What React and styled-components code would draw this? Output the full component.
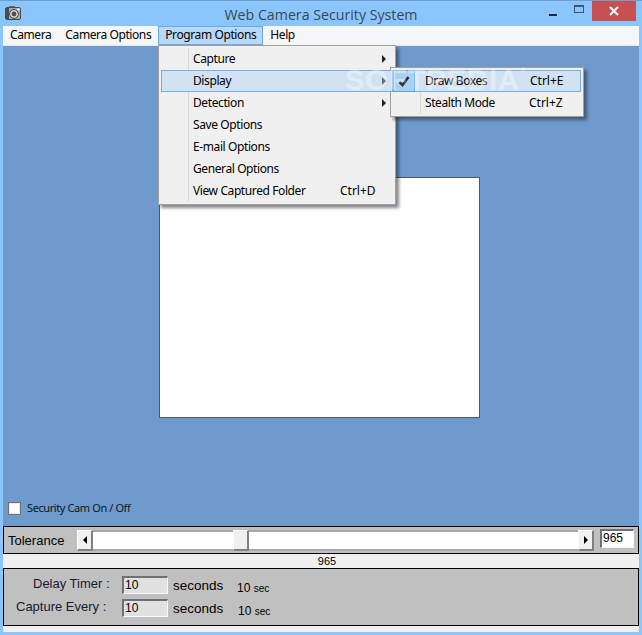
import styled, { createGlobalStyle } from "styled-components";

const GlobalStyle = createGlobalStyle`
  html, body { margin: 0; padding: 0; }
  body { font-family: "Noto Sans", sans-serif; }
`;

const Win = styled.div`
  position: relative;
  width: 642px;
  height: 635px;
  box-sizing: border-box;
  overflow: hidden;
  background: #8ac6fd;
  border-top: 1px solid #6f9fd0;
  display: flex;
  flex-direction: column;
`;

const TitleBar = styled.div`
  height: 25px;
  flex: none;
  display: flex;
  align-items: flex-start;
  padding-left: 5px;
`;

const Title = styled.div`
  position: absolute;
  left: 0;
  right: 0;
  top: 3px;
  text-align: center;
  font-family: "Open Sans", "Noto Sans", sans-serif;
  font-size: 14.2px;
  line-height: 21px;
  color: #3a4654;
`;

const WinButtons = styled.div`
  margin-left: auto;
  margin-right: 6px;
  display: flex;
  align-items: flex-start;
  position: relative;
`;

const WinBtn = styled.div`
  width: ${(p) => p.$w}px;
  height: 20px;
  display: flex;
  align-items: center;
  justify-content: center;
  background: ${(p) => p.$bg || "transparent"};
`;

const Content = styled.div`
  flex: 1;
  margin: 0 3px 3px;
  display: flex;
  flex-direction: column;
  min-height: 0;
`;

const MenuBar = styled.div`
  height: 19px;
  flex: none;
  background: #f5f6f7;
  border-bottom: 1px solid #e8e9ea;
  display: flex;
  font-size: 12px;
  letter-spacing: -0.4px;
  color: #000;
`;

const MenuItem = styled.div`
  height: 19px;
  box-sizing: border-box;
  padding: 0 ${(p) => (p.$active ? 6 : 7)}px;
  line-height: 16px;
  white-space: nowrap;
  background: ${(p) => (p.$active ? "#b8d8f8" : "transparent")};
  border: ${(p) => (p.$active ? "1px solid #6fa8e0" : "1px solid transparent")};
  border-left-width: ${(p) => (p.$active ? 1 : 0)}px;
  border-right-width: ${(p) => (p.$active ? 1 : 0)}px;
`;

const Stage = styled.div`
  flex: 1;
  background: #6e9acd;
  display: flex;
  flex-direction: column;
  padding: 131px 0 11px 5px;
  min-height: 0;
`;

const Canvas = styled.div`
  width: 321px;
  height: 241px;
  margin-left: 151px;
  box-sizing: border-box;
  background: #fff;
  border: 1px solid #4a5a70;
`;

const CheckRow = styled.label`
  margin-top: auto;
  display: flex;
  align-items: center;
  gap: 6px;
  font-family: "Noto Sans", sans-serif;
  font-size: 11px;
  letter-spacing: -0.4px;
  line-height: 14px;
  color: #101820;
`;

const CheckBox = styled.span`
  width: 13px;
  height: 13px;
  box-sizing: border-box;
  background: #fff;
  border: 1px solid #70706f;
  box-shadow: inset 0 0 0 1px #e8e8e8;
`;

const ToleranceBar = styled.div`
  height: 28px;
  flex: none;
  box-sizing: border-box;
  background: #c0c0c0;
  border: 1px solid #000;
  display: flex;
  align-items: center;
  padding-left: 4px;
  font-family: "Liberation Sans", Arial, sans-serif;
  font-size: 13px;
  color: #000;
`;

const ToleranceLabel = styled.div`
  width: 69px;
  flex: none;
`;

const Scroll = styled.div`
  width: 517px;
  height: 21px;
  flex: none;
  display: flex;
  background: #fff;
  border-top: 2px solid #a8a8a8;
  border-bottom: 2px solid #a8a8a8;
  box-sizing: border-box;
  position: relative;
`;

const ScrollBtn = styled.div`
  width: 16px;
  margin: -2px 0;
  flex: none;
  box-sizing: border-box;
  background: #f0f0f0;
  border-style: solid;
  border-width: 1px 2px 2px 1px;
  border-color: #fcfcfc #808080 #808080 #fcfcfc;
  display: flex;
  align-items: center;
  justify-content: center;
`;

const Thumb = styled(ScrollBtn)`
  margin: -2px 0 -2px 140px;
`;

const Arrow = styled.span`
  width: 0;
  height: 0;
  border-top: 4px solid transparent;
  border-bottom: 4px solid transparent;
  ${(p) => (p.$right ? "border-left: 4px solid #000;" : "border-right: 4px solid #000;")}
`;

const Track = styled.div`
  flex: 1;
`;

const ToleranceValue = styled.div`
  width: 34px;
  height: 19px;
  margin-left: 6px;
  margin-bottom: 3px;
  box-sizing: border-box;
  background: #fff;
  border-style: solid;
  border-width: 2px 1px 1px 2px;
  border-color: #707070 #f4f4f4 #f4f4f4 #707070;
  font-size: 12px;
  line-height: 15px;
  padding-left: 1px;
  color: #000;
`;

const Strip = styled.div`
  height: ${(p) => p.$h}px;
  flex: none;
  background: #f0f0f0;
  box-sizing: border-box;
  padding-left: 12px;
  text-align: center;
  font-family: "Liberation Sans", Arial, sans-serif;
  font-size: 11px;
  line-height: 14px;
  color: #000;
`;

const TimerPanel = styled.div`
  height: 58px;
  flex: none;
  box-sizing: border-box;
  background: #c0c0c0;
  border: 1px solid #000;
  display: flex;
  flex-direction: column;
  gap: 4px;
  padding-top: 7px;
  font-family: "Liberation Sans", Arial, sans-serif;
  color: #000;
`;

const TimerRow = styled.div`
  height: 19px;
  display: grid;
  grid-template-columns: 118px 46px 69px auto;
  align-items: start;
`;

const TimerLabel = styled.div`
  font-size: 13px;
  line-height: 16px;
  padding-left: ${(p) => p.$left}px;
  white-space: nowrap;
  color: #1a1a30;
`;

const TimerInput = styled.div`
  height: 18px;
  box-sizing: border-box;
  background: #e1e1e1;
  border-style: solid;
  border-width: 2px 1px 1px 2px;
  border-color: #707070 #f8f8f8 #f8f8f8 #707070;
  font-size: 12px;
  line-height: 14px;
  padding-left: 1px;
`;

const Seconds = styled.div`
  font-size: 13.5px;
  line-height: 16px;
  padding: 2px 0 0 5px;
`;

const Sec = styled.div`
  font-size: 12px;
  line-height: 14px;
  padding: 5px 0 0 ${(p) => p.$left}px;
  white-space: nowrap;
  & small { font-size: 10px; }
`;

const Menu = styled.div`
  position: absolute;
  left: ${(p) => p.$x}px;
  top: ${(p) => p.$y}px;
  width: ${(p) => p.$w}px;
  box-sizing: border-box;
  padding: 2px;
  background: #f0f0f0;
  border: 1px solid #a0a0a0;
  box-shadow: 3px 3px 3px rgba(40, 40, 50, 0.55);
  font-size: 12px;
  letter-spacing: -0.4px;
  color: #000;

  &::before {
    content: "";
    position: absolute;
    left: ${(p) => p.$gutter}px;
    top: 2px;
    bottom: 2px;
    width: 1px;
    background: #d8d8d8;
  }
`;

const MenuRow = styled.div`
  position: relative;
  z-index: 1;
  height: 22px;
  box-sizing: border-box;
  display: flex;
  align-items: center;
  padding-left: ${(p) => p.$pad}px;
  padding-bottom: 2px;
  background: ${(p) => (p.$hot ? "#d1e2f2" : "transparent")};
  border: 1px solid ${(p) => (p.$hot ? "#78aee5" : "transparent")};
  white-space: nowrap;
`;

const Shortcut = styled.span`
  position: absolute;
  left: ${(p) => p.$x}px;
  letter-spacing: 0;
`;

const SubArrow = styled.span`
  position: absolute;
  right: 6px;
  top: 6px;
  width: 0;
  height: 0;
  border-top: 4px solid transparent;
  border-bottom: 4px solid transparent;
  border-left: 4px solid #222;
`;

const CheckMark = styled.span`
  position: absolute;
  left: -1px;
  top: -1px;
  width: 22px;
  height: 22px;
  box-sizing: border-box;
  background: #a9d2f0;
  border: 1px solid #5fa0dc;
  display: flex;
  align-items: center;
  justify-content: center;
`;

const Watermark = styled.div`
  position: absolute;
  left: 345px;
  top: 62px;
  font-family: "Liberation Sans", Arial, sans-serif;
  font-weight: bold;
  font-size: 29px;
  line-height: 34px;
  letter-spacing: 1px;
  color: rgba(255, 255, 255, 0.4);
  pointer-events: none;
  z-index: 5;
  & sup { font-size: 9px; font-weight: normal; vertical-align: 16px; line-height: 0; }
`;

const CameraIcon = () => (
  <svg width="17" height="17" viewBox="0 0 17 17" style={{ marginTop: 4 }}>
    <path d="M4 1h6v2H4z" fill="#6a6a6e" />
    <rect x="0.5" y="2.5" width="15" height="12" rx="1.5" fill="#a4a7ab" stroke="#4a4a4d" />
    <rect x="1" y="3" width="3" height="11" fill="#4b4b4e" />
    <circle cx="9" cy="9" r="4.4" fill="#d5d7da" stroke="#444" />
    <circle cx="9" cy="9" r="2.4" fill="#4a5058" />
    <rect x="12" y="3.5" width="3" height="2" fill="#e8e8e8" />
  </svg>
);

const App = () => {
  return (
    <Win>
      <GlobalStyle />
      <TitleBar>
        <CameraIcon />
        <Title>Web Camera Security System</Title>
        <WinButtons>
          <WinBtn $w={26}>
            <svg width="9" height="9" viewBox="0 0 9 9" style={{ marginTop: 3 }}>
              <rect x="0" y="6" width="8" height="2" fill="#1f2a36" />
            </svg>
          </WinBtn>
          <WinBtn $w={26}>
            <svg width="11" height="9" viewBox="0 0 11 9" style={{ marginBottom: 3 }}>
              <rect x="0.5" y="0.5" width="9" height="7" fill="none" stroke="#40566c" />
              <rect x="0" y="0" width="10" height="2" fill="#40566c" />
            </svg>
          </WinBtn>
          <WinBtn $w={44} $bg="#c75050">
            <svg width="10" height="10" viewBox="0 0 10 10">
              <path d="M1 1l8 8M9 1l-8 8" stroke="#fff" strokeWidth="2" />
            </svg>
          </WinBtn>
        </WinButtons>
      </TitleBar>
      <Content>
        <MenuBar>
          <MenuItem>Camera</MenuItem>
          <MenuItem>Camera Options</MenuItem>
          <MenuItem $active>Program Options</MenuItem>
          <MenuItem>Help</MenuItem>
        </MenuBar>
        <Stage>
          <Canvas />
          <CheckRow>
            <CheckBox />
            Security Cam On / Off
          </CheckRow>
        </Stage>
        <ToleranceBar>
          <ToleranceLabel>Tolerance</ToleranceLabel>
          <Scroll>
            <ScrollBtn><Arrow /></ScrollBtn>
            <Thumb />
            <Track />
            <ScrollBtn><Arrow $right /></ScrollBtn>
          </Scroll>
          <ToleranceValue>965</ToleranceValue>
        </ToleranceBar>
        <Strip $h={14}>965</Strip>
        <TimerPanel>
          <TimerRow>
            <TimerLabel $left={29}>Delay Timer :</TimerLabel>
            <TimerInput>10</TimerInput>
            <Seconds>seconds</Seconds>
            <Sec $left={0}>10 <small>sec</small></Sec>
          </TimerRow>
          <TimerRow>
            <TimerLabel $left={12}>Capture Every :</TimerLabel>
            <TimerInput>10</TimerInput>
            <Seconds>seconds</Seconds>
            <Sec $left={1}>10 <small>sec</small></Sec>
          </TimerRow>
        </TimerPanel>
        <Strip $h={6} />
      </Content>

      <Menu $x={158} $y={44} $w={238} $gutter={29}>
        <MenuRow $pad={31}>Capture<SubArrow /></MenuRow>
        <MenuRow $pad={31} $hot>Display<SubArrow /></MenuRow>
        <MenuRow $pad={31}>Detection<SubArrow /></MenuRow>
        <MenuRow $pad={31}>Save Options</MenuRow>
        <MenuRow $pad={31}>E-mail Options</MenuRow>
        <MenuRow $pad={31}>General Options</MenuRow>
        <MenuRow $pad={31}>View Captured Folder<Shortcut $x={178}>Ctrl+D</Shortcut></MenuRow>
      </Menu>

      <Menu $x={390} $y={66} $w={194} $gutter={29}>
        <MenuRow $pad={31} $hot>
          <CheckMark>
            <svg width="12" height="11" viewBox="0 0 12 11">
              <path d="M1.5 6l3 3 6-8" fill="none" stroke="#2a3440" strokeWidth="2.6" />
            </svg>
          </CheckMark>
          Draw Boxes<Shortcut $x={136}>Ctrl+E</Shortcut>
        </MenuRow>
        <MenuRow $pad={31}>Stealth Mode<Shortcut $x={135}>Ctrl+Z</Shortcut></MenuRow>
      </Menu>

      <Watermark>SOFTPEDIA<sup>®</sup></Watermark>
    </Win>
  );
};

export default App;
